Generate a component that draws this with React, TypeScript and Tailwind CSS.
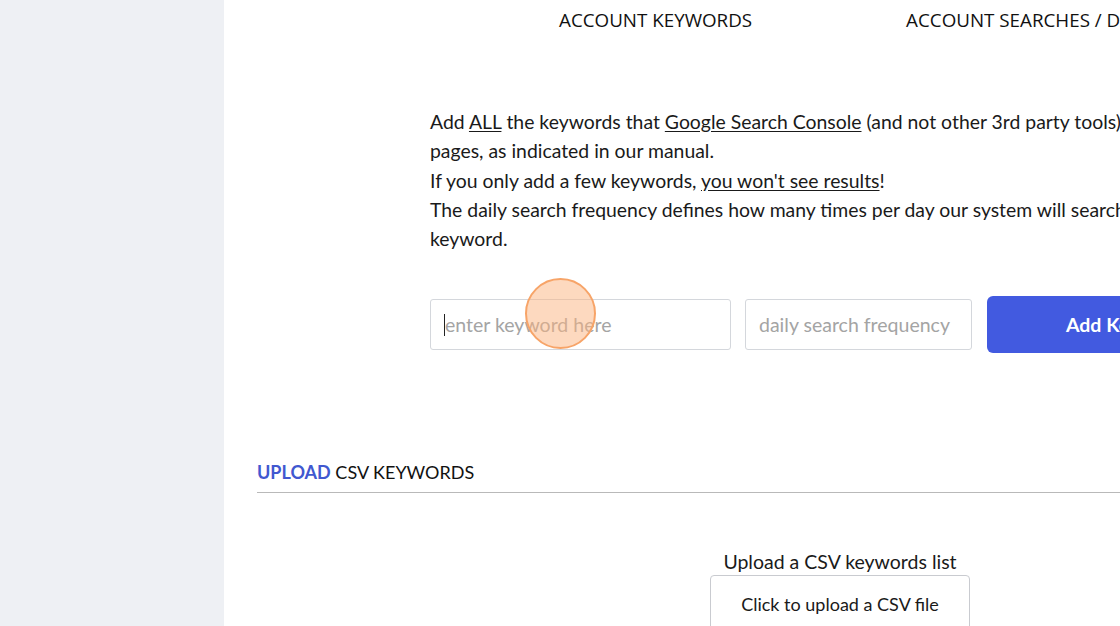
import React from 'react';

const font = { fontFamily: 'Lato, "Open Sans", sans-serif' };

export default function App() {
  return (
    <div className="flex h-[626px] w-[1120px] overflow-hidden bg-white text-[#1a1a1a]" style={font}>
      <aside className="w-[224px] shrink-0 bg-[#eef0f4]" />
      <main className="relative min-w-[1100px] flex-1 px-[33px]">
        <nav className="flex h-[40px] items-center text-[18.8px] text-[#111]" style={{ fontFamily: '"Open Sans", sans-serif' }}>
          <div className="ml-[302px] whitespace-nowrap">ACCOUNT KEYWORDS</div>
          <div className="ml-[154px] whitespace-nowrap">ACCOUNT SEARCHES / DAILY SEARCHES</div>
        </nav>

        <section className="ml-[173px] mt-[67px] w-[900px] text-[19.4px] leading-[29.3px]">
          <p className="whitespace-nowrap">
            Add <u className="underline-offset-2">ALL</u> the keywords that <u className="underline-offset-2">Google Search Console</u> (and not other 3rd party tools)
          </p>
          <p>pages, as indicated in our manual.</p>
          <p>
            If you only add a few keywords, <u className="underline-offset-2">you won't see results</u>!
          </p>
          <p className="whitespace-nowrap">The daily search frequency defines how many times per day our system will search</p>
          <p>keyword.</p>

          <div className="mt-[43px] flex items-center">
            <div className="relative flex h-[51px] w-[301px] shrink-0 items-center rounded-[3px] border border-[#d4d7dc] px-[13px]">
              <span className="h-[22px] w-px bg-[#222]" />
              <span className="text-[19.5px] text-[#a4a4a4] whitespace-nowrap">enter keyword here</span>
            </div>
            <div className="ml-[14px] flex h-[51px] w-[227px] shrink-0 items-center rounded-[3px] border border-[#d4d7dc] px-[13px] text-[19.5px] text-[#a4a4a4] whitespace-nowrap">
              daily search frequency
            </div>
            <button className="ml-[15px] h-[57px] w-[276px] shrink-0 rounded-[6px] bg-[#425ae0] text-[19.5px] font-bold text-white whitespace-nowrap">
              Add Keyword
            </button>
          </div>
        </section>

        <section className="mt-[107px]">
          <h2 className="text-[18px] leading-[24px] text-[#111]">
            <span className="font-bold text-[#4158d0]">UPLOAD</span> CSV KEYWORDS
          </h2>
          <hr className="mt-[8px] border-t border-[#b9b9b9]" />
          <div className="mt-[56px] ml-[453px] flex w-[260px] flex-col items-center">
            <p className="whitespace-nowrap text-[19.5px] leading-[26px]">Upload a CSV keywords list</p>
            <div className="flex h-[60px] w-[260px] items-start justify-center rounded-t-[4px] border border-[#c9cbd0] pt-[15px] text-[18px] whitespace-nowrap">
              Click to upload a CSV file
            </div>
          </div>
        </section>

        <div className="pointer-events-none absolute left-[301px] top-[278px] h-[71px] w-[71px] rounded-full border-2 border-[#f7a468] bg-[#fbb47f]/50" />
      </main>
    </div>
  );
}
